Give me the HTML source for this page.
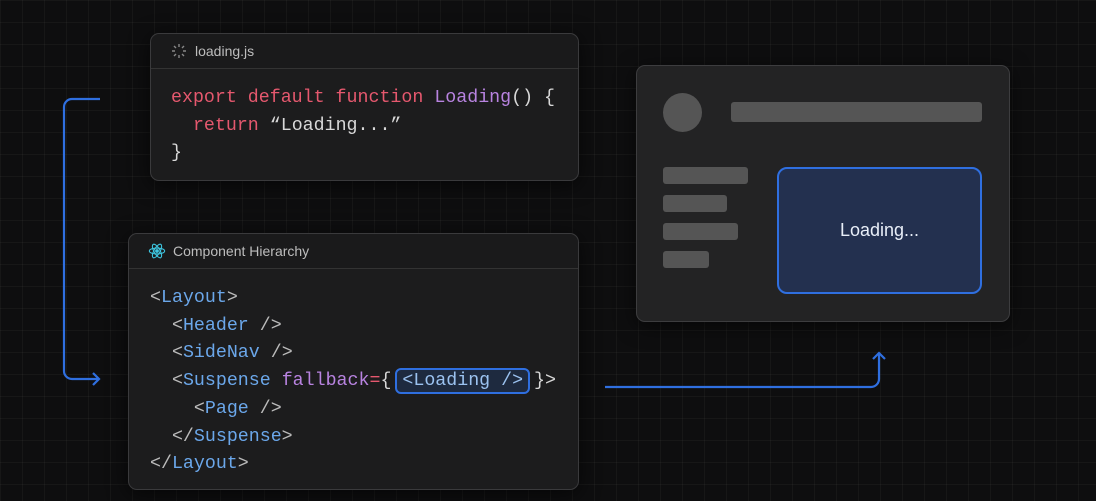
<!DOCTYPE html>
<html><head><style>
body{margin:0;width:1096px;height:501px;overflow:hidden;background:#0e0e0f;
background-image:linear-gradient(rgba(255,255,255,0.035) 1px,transparent 1px),linear-gradient(90deg,rgba(255,255,255,0.035) 1px,transparent 1px);background-size:22px 22px;position:relative;font-family:"Liberation Sans",sans-serif}
.card{position:absolute;background:#1c1c1d;border:1px solid #3a3a3c;border-radius:9px;box-shadow:0 4px 20px rgba(0,0,0,.6)}
.hd{height:34px;border-bottom:1px solid #333;display:flex;align-items:center;color:#bdbdbd;font-size:14px;background:#1a1a1b;border-radius:9px 9px 0 0}
.code{font-family:"Liberation Mono",monospace;font-size:18.3px;line-height:27.7px;color:#d8d8d8;white-space:pre}
.r{color:#e5586e}.p{color:#b883e0}.b{color:#6ba7ea}.g{color:#bbb}
.bar{position:absolute;background:#555;border-radius:3px}
.hl{position:relative;color:#9bc2f0}
.hl i{position:absolute;left:-7px;right:-7px;top:-3px;bottom:-3px;border:2px solid #2f6fe0;border-radius:6px;background:rgba(47,111,224,.18)}
</style></head><body>
<svg width="1096" height="501" style="position:absolute;left:0;top:0" fill="none" stroke="#2f6fe0" stroke-width="2.2">
<path d="M100 99H72a8 8 0 0 0-8 8V371a8 8 0 0 0 8 8H99"/>
<path d="M93 373l6 6-6 6"/>
<path d="M605 387H871a8 8 0 0 0 8-8V353"/>
<path d="M873 359l6-6 6 6"/>
</svg>
<div class="card" style="left:150px;top:33px;width:427px;height:146px">
<div class="hd"><svg width="16" height="16" viewBox="0 0 16 16" style="margin:0 8px 0 20px" stroke="#888" stroke-width="1.4"><path d="M8 1v3M8 12v3M1 8h3M12 8h3M3 3l2 2M11 11l2 2M3 13l2-2M11 5l2-2"/></svg>loading.js</div>
<div class="code" style="padding:16px 0 0 20px"><span class="r">export default function</span> <span class="p">Loading</span>() {
  <span class="r">return</span> “Loading...”
}</div></div>
<div class="card" style="left:128px;top:233px;width:449px;height:255px">
<div class="hd"><svg width="18" height="18" viewBox="-10 -10 20 20" style="margin:0 7px 0 19px" stroke="#3ec6e0" stroke-width="1.2" fill="none"><ellipse rx="8.5" ry="3.3"/><ellipse rx="8.5" ry="3.3" transform="rotate(60)"/><ellipse rx="8.5" ry="3.3" transform="rotate(120)"/><circle r="1.5" fill="#3ec6e0"/></svg>Component Hierarchy</div>
<div class="code" style="padding:16px 0 0 21px"><span class="g">&lt;</span><span class="b">Layout</span><span class="g">&gt;</span>
  <span class="g">&lt;</span><span class="b">Header</span> <span class="g">/&gt;</span>
  <span class="g">&lt;</span><span class="b">SideNav</span> <span class="g">/&gt;</span>
  <span class="g">&lt;</span><span class="b">Suspense</span> <span class="p">fallback</span><span class="r">=</span>{ <span class="hl"><i></i><span style="position:relative">&lt;Loading /&gt;</span></span> }&gt;
    <span class="g">&lt;</span><span class="b">Page</span> <span class="g">/&gt;</span>
  <span class="g">&lt;/</span><span class="b">Suspense</span><span class="g">&gt;</span>
<span class="g">&lt;/</span><span class="b">Layout</span><span class="g">&gt;</span></div></div>
<div class="card" style="left:636px;top:65px;width:372px;height:255px;background:#232324;border-color:#3d3d3f">
<div style="position:absolute;left:26px;top:27px;width:39px;height:39px;border-radius:50%;background:#555"></div>
<div class="bar" style="left:94px;top:36px;width:251px;height:20px"></div>
<div class="bar" style="left:26px;top:101px;width:85px;height:17px"></div>
<div class="bar" style="left:26px;top:129px;width:64px;height:17px"></div>
<div class="bar" style="left:26px;top:157px;width:75px;height:17px"></div>
<div class="bar" style="left:26px;top:185px;width:46px;height:17px"></div>
<div style="position:absolute;left:140px;top:101px;width:201px;height:123px;border:2px solid #2f6fe0;border-radius:10px;background:#23304f;color:#e8eef8;font-size:18px;display:flex;align-items:center;justify-content:center">Loading...</div>
</div>
</body></html>
